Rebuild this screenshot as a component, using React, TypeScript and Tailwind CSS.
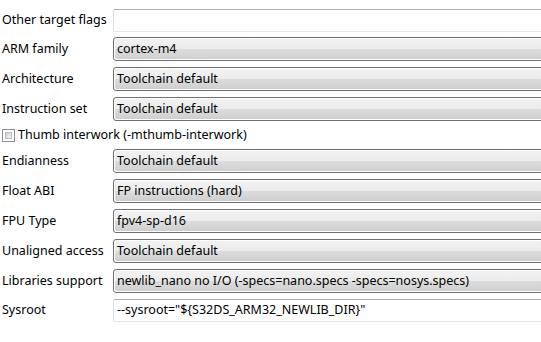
const LABEL_FONT = "font-['Noto_Sans','Open_Sans',sans-serif] text-[12.5px] text-black"

type Row =
    | { kind: 'text'; label: string; value: string }
    | { kind: 'combo'; label: string; value: string }
    | { kind: 'check'; label: string }

const ROWS: Row[] = [
    { kind: 'text', label: 'Other target flags', value: '' },
    { kind: 'combo', label: 'ARM family', value: 'cortex-m4' },
    { kind: 'combo', label: 'Architecture', value: 'Toolchain default' },
    { kind: 'combo', label: 'Instruction set', value: 'Toolchain default' },
    { kind: 'check', label: 'Thumb interwork (-mthumb-interwork)' },
    { kind: 'combo', label: 'Endianness', value: 'Toolchain default' },
    { kind: 'combo', label: 'Float ABI', value: 'FP instructions (hard)' },
    { kind: 'combo', label: 'FPU Type', value: 'fpv4-sp-d16' },
    { kind: 'combo', label: 'Unaligned access', value: 'Toolchain default' },
    {
        kind: 'combo',
        label: 'Libraries support',
        value: 'newlib_nano no I/O (-specs=nano.specs -specs=nosys.specs)',
    },
    {
        kind: 'text',
        label: 'Sysroot',
        value: '--sysroot="${S32DS_ARM32_NEWLIB_DIR}"',
    },
]

const TextField = ({ value }: { value: string }) => (
    <div className="h-[23px] w-[440px] shrink-0 flex items-center pl-[3px] bg-white border border-[#abadb3] border-x-[#dbdfe6] border-b-[#e3e9ef] rounded-[2px]">
        <span className="whitespace-nowrap">{value}</span>
    </div>
)

const Combo = ({ value }: { value: string }) => (
    <div className="h-[24px] w-[440px] shrink-0 rounded-[3px] border border-[#707070] p-px">
        <div className="h-full flex items-center pl-[2px] rounded-[2px] bg-[linear-gradient(to_bottom,#f2f2f2_0%,#ebebeb_50%,#dddddd_50%,#cfcfcf_100%)]">
            <span className="whitespace-nowrap">{value}</span>
        </div>
    </div>
)

export default function App() {
    return (
        <div className={`w-[541px] h-[342px] overflow-hidden bg-white ${LABEL_FONT}`}>
            <div className="flex flex-col pt-[9px] gap-[6px]">
                {ROWS.map((row, i) => {
                    if (row.kind === 'check') {
                        return (
                            <div key={i} className="h-[16px] flex items-center pl-[2px] gap-[3px]">
                                <div className="w-[13px] h-[13px] border border-[#8e8f8f] bg-white p-[2px]">
                                    <div className="w-full h-full bg-[linear-gradient(to_bottom_right,#cbcfd5,#f6f6f6)] border border-[#b8bcc2]" />
                                </div>
                                <span className="whitespace-nowrap">{row.label}</span>
                            </div>
                        )
                    }
                    return (
                        <div key={i} className={`flex items-center ${i === 0 ? 'mb-[-1px]' : ''}`}>
                            <div className="w-[113px] shrink-0 pl-[2px] whitespace-nowrap">{row.label}</div>
                            {row.kind === 'text' ? (
                                <TextField value={row.value} />
                            ) : (
                                <Combo value={row.value} />
                            )}
                        </div>
                    )
                })}
            </div>
        </div>
    )
}
